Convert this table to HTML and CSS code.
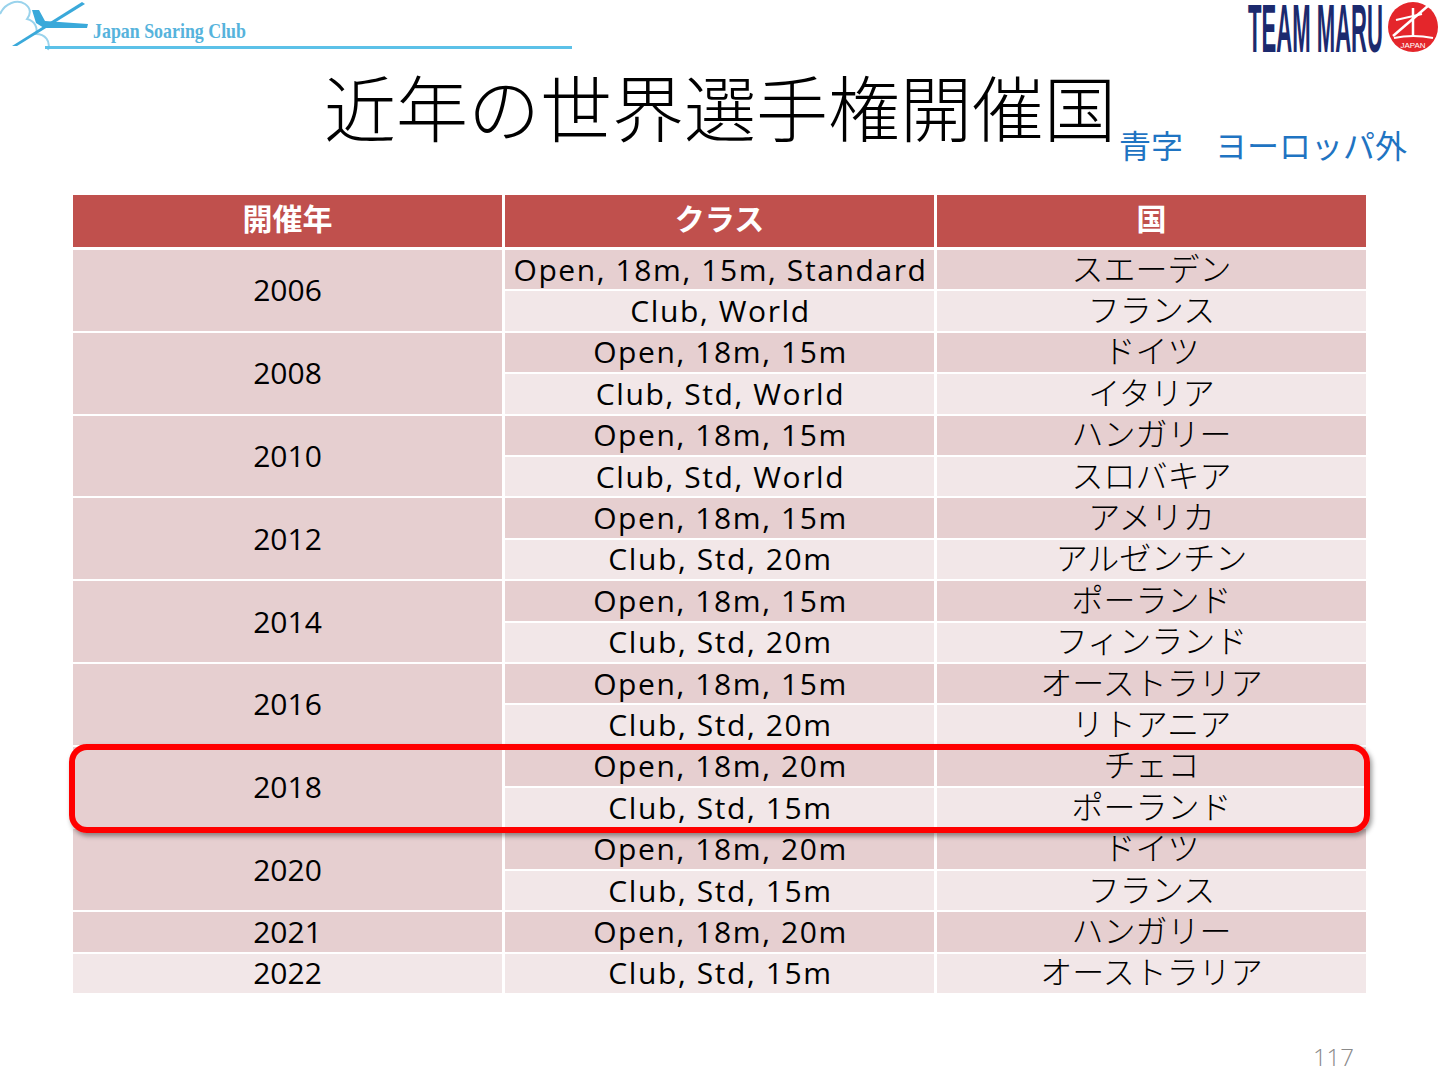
FILE: index.html
```html
<!DOCTYPE html>
<html lang="ja">
<head>
<meta charset="utf-8">
<title>近年の世界選手権開催国</title>
<link rel="stylesheet" href="styles.css">
</head>
<body>
<header class="topbar">
  <svg class="logo-jsc" width="580" height="56" viewBox="0 0 580 56">
    <path d="M0 14 C5 3, 17 -1, 25 4 C31 8, 31 14, 27 19 C35 21, 38 28, 36 34 C45 34, 51 41, 48 50" fill="none" stroke="#9ad3ec" stroke-width="2"/>
    <path d="M12 46 L82 2 L85 4 L17 46 Z" fill="#3aa9da"/>
    <path d="M32 10 L39 10 L45 21 L88 24 L87 28 L44 28 L36 23 Z" fill="#3aa9da"/>
    <text x="93" y="38" class="jsc-text" textLength="153" lengthAdjust="spacingAndGlyphs">Japan Soaring Club</text>
    <rect x="45" y="46" width="527" height="3" fill="#5cc1e8"/>
  </svg>
  <svg class="logo-maru" width="195" height="56" viewBox="1245 0 195 56">
    <text x="1248" y="52" class="maru-text" textLength="135" lengthAdjust="spacingAndGlyphs">TEAM MARU</text>
    <circle cx="1413" cy="27" r="25" fill="#e4262b"/>
    <path d="M1429 5 L1393 36" stroke="#fff" stroke-width="2.5" fill="none"/>
    <path d="M1413 8 L1413 37" stroke="#fff" stroke-width="2.5" fill="none"/>
    <path d="M1396 20 L1422 14" stroke="#fff" stroke-width="2" fill="none"/>
    <path d="M1394 38 Q1413 34 1433 38" stroke="#fff" stroke-width="2" fill="none"/>
    <text x="1413" y="48" class="japan-text" text-anchor="middle">JAPAN</text>
  </svg>
</header>

<div class="title-row">
  <h1 class="title">近年の世界選手権開催国</h1>
  <div class="subtitle">青字　ヨーロッパ外</div>
</div>

<div class="table-wrap">
  <div class="thead">
    <div class="th">開催年</div>
    <div class="th">クラス</div>
    <div class="th">国</div>
  </div>
  <div class="tbody">
    <div class="year">2006</div>
    <div class="cell dark cls">Open, 18m, 15m, Standard</div>
    <div class="cell dark jp">スエーデン</div>
    <div class="cell light cls">Club, World</div>
    <div class="cell light jp">フランス</div>

    <div class="year">2008</div>
    <div class="cell dark cls">Open, 18m, 15m</div>
    <div class="cell dark jp">ドイツ</div>
    <div class="cell light cls">Club, Std, World</div>
    <div class="cell light jp">イタリア</div>

    <div class="year">2010</div>
    <div class="cell dark cls">Open, 18m, 15m</div>
    <div class="cell dark jp">ハンガリー</div>
    <div class="cell light cls">Club, Std, World</div>
    <div class="cell light jp">スロバキア</div>

    <div class="year">2012</div>
    <div class="cell dark cls">Open, 18m, 15m</div>
    <div class="cell dark jp">アメリカ</div>
    <div class="cell light cls">Club, Std, 20m</div>
    <div class="cell light jp">アルゼンチン</div>

    <div class="year">2014</div>
    <div class="cell dark cls">Open, 18m, 15m</div>
    <div class="cell dark jp">ポーランド</div>
    <div class="cell light cls">Club, Std, 20m</div>
    <div class="cell light jp">フィンランド</div>

    <div class="year">2016</div>
    <div class="cell dark cls">Open, 18m, 15m</div>
    <div class="cell dark jp">オーストラリア</div>
    <div class="cell light cls">Club, Std, 20m</div>
    <div class="cell light jp">リトアニア</div>

    <div class="year">2018</div>
    <div class="cell dark cls">Open, 18m, 20m</div>
    <div class="cell dark jp">チェコ</div>
    <div class="cell light cls">Club, Std, 15m</div>
    <div class="cell light jp">ポーランド</div>

    <div class="year">2020</div>
    <div class="cell dark cls">Open, 18m, 20m</div>
    <div class="cell dark jp">ドイツ</div>
    <div class="cell light cls">Club, Std, 15m</div>
    <div class="cell light jp">フランス</div>

    <div class="year single dark">2021</div>
    <div class="cell dark cls">Open, 18m, 20m</div>
    <div class="cell dark jp">ハンガリー</div>

    <div class="year single light">2022</div>
    <div class="cell light cls">Club, Std, 15m</div>
    <div class="cell light jp">オーストラリア</div>
  </div>
  <div class="highlight"></div>
</div>

<footer class="page-num">117</footer>
</body>
</html>
```

FILE: styles.css
```css
* { box-sizing: border-box; }

body {
  margin: 0;
  width: 1440px;
  height: 1080px;
  overflow: hidden;
  background: #ffffff;
  color: #000000;
  font-family: "Open Sans", "Noto Sans CJK JP", sans-serif;
}

.topbar {
  display: flex;
  justify-content: space-between;
  height: 56px;
}

.logo-jsc, .logo-maru { display: block; }

.jsc-text {
  font-family: "Liberation Serif", serif;
  font-size: 21px;
  font-weight: 700;
  fill: #56b3dc;
}

.maru-text {
  font-family: "Liberation Sans", sans-serif;
  font-size: 68px;
  font-weight: 700;
  fill: #1c2a6e;
}

.japan-text {
  font-family: "Liberation Sans", sans-serif;
  font-size: 8px;
  fill: #ffffff;
}

.title-row {
  display: grid;
  grid-template-columns: 1fr auto 1fr;
  margin-top: 13px;
  height: 72px;
}

.title {
  grid-column: 2;
  margin: 0;
  font-family: "Noto Sans CJK JP", sans-serif;
  font-size: 72px;
  line-height: 72px;
  font-weight: 300;
  white-space: nowrap;
}

.subtitle {
  align-self: end;
  margin-bottom: -19px;
  margin-left: 3px;
  font-family: "Noto Sans CJK JP", sans-serif;
  font-size: 32px;
  line-height: 32px;
  color: #1f74c2;
  white-space: nowrap;
}

.table-wrap {
  position: relative;
  margin: 54px 0 0 73px;
  width: 1293px;
}

.thead {
  display: grid;
  grid-template-columns: repeat(3, 429px);
  column-gap: 3px;
  height: 49px;
}

.th {
  background: #c0504d;
  color: #ffffff;
  font-family: "Noto Sans CJK JP", sans-serif;
  font-weight: 700;
  font-size: 30px;
  padding-bottom: 8px;
  display: flex;
  align-items: center;
  justify-content: center;
}

.tbody {
  display: grid;
  grid-template-columns: repeat(3, 429px);
  column-gap: 3px;
  row-gap: 2px;
  grid-auto-rows: 39.4px;
  margin-top: 6px;
}

.year, .cell {
  display: flex;
  align-items: center;
  justify-content: center;
  font-size: 30px;
  line-height: 1;
  white-space: nowrap;
}

.year {
  grid-row: span 2;
  background: #e6cfd0;
}

.year.single { grid-row: span 1; }

.dark { background: #e6cfd0; }
.light { background: #f2e7e8; }

.cls {
  letter-spacing: 1.6px;
  padding-left: 2px;
}

.jp {
  font-family: "Noto Sans CJK JP", sans-serif;
  font-size: 32px;
  font-weight: 300;
  padding-bottom: 6px;
}

.highlight {
  position: absolute;
  left: -4px;
  top: 549px;
  width: 1301px;
  height: 89px;
  border: 6px solid #ff0000;
  border-radius: 18px;
  box-shadow: 2px 3px 5px rgba(0, 0, 0, 0.4);
}

.page-num {
  margin-top: 50px;
  padding-right: 86px;
  text-align: right;
  font-family: "Open Sans", sans-serif;
  font-weight: 300;
  font-size: 24px;
  line-height: 28px;
  color: #8a8a8a;
}
```
